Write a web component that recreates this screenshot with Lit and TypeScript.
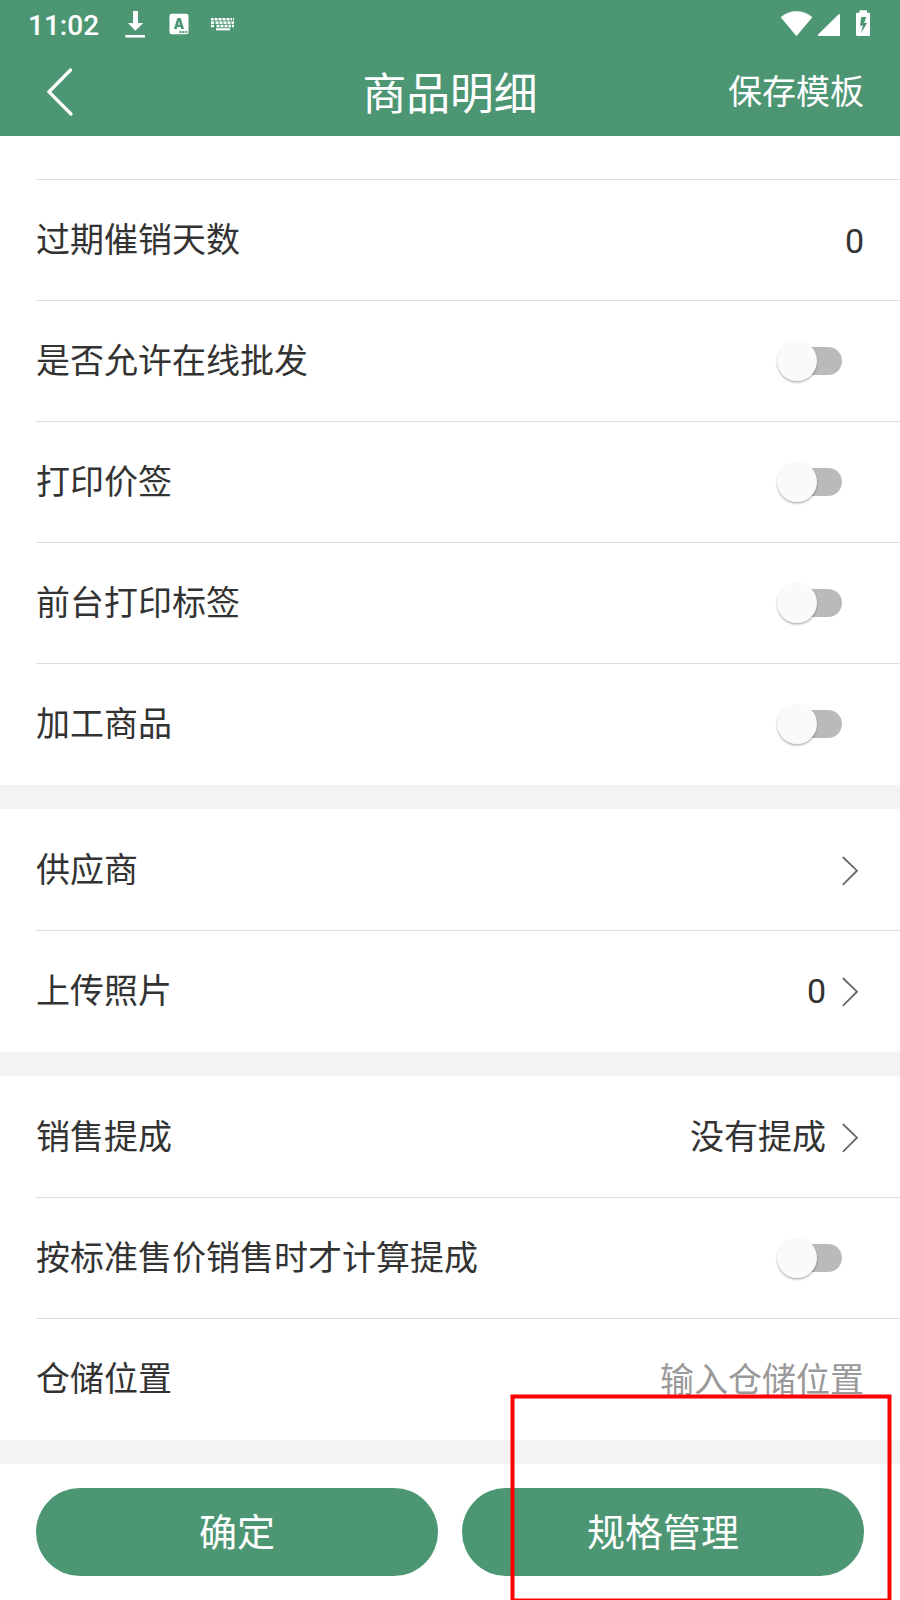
import { LitElement, html, css, svg, nothing } from "lit";
import { customElement, property } from "lit/decorators.js";

type Row = {
  label: string;
  value?: string;
  placeholder?: string;
  toggle?: boolean;
  link?: boolean;
};

const GROUPS: Row[][] = [
  [
    { label: "过期催销天数", value: "0" },
    { label: "是否允许在线批发", toggle: true },
    { label: "打印价签", toggle: true },
    { label: "前台打印标签", toggle: true },
    { label: "加工商品", toggle: true },
  ],
  [
    { label: "供应商", link: true },
    { label: "上传照片", value: "0", link: true },
  ],
  [
    { label: "销售提成", value: "没有提成", link: true },
    { label: "按标准售价销售时才计算提成", toggle: true },
    { label: "仓储位置", placeholder: "输入仓储位置" },
  ],
];

@customElement("toggle-switch")
export class ToggleSwitch extends LitElement {
  static styles = css`
    :host {
      display: block;
      width: 66px;
      height: 42px;
      margin-right: 22px;
    }
    .box {
      display: grid;
      align-items: center;
      height: 100%;
    }
    .track,
    .thumb {
      grid-area: 1 / 1;
    }
    .track {
      height: 28px;
      margin-left: 8px;
      border-radius: 14px;
      background: #bababa;
    }
    .thumb {
      width: 40.6px;
      height: 40.6px;
      margin-left: 0.6px;
      border-radius: 50%;
      background: #fafafa;
      box-shadow: 0 1px 2px rgba(0, 0, 0, 0.18), 0 2px 2px rgba(0, 0, 0, 0.14);
    }
  `;
  render() {
    return html`<div class="box"><div class="track"></div><div class="thumb"></div></div>`;
  }
}

@customElement("form-row")
export class FormRow extends LitElement {
  @property({ attribute: false }) row!: Row;

  static styles = css`
    :host {
      display: block;
    }
    .row {
      display: flex;
      align-items: center;
      justify-content: space-between;
      height: 120px;
      padding-right: 36px;
      font-size: 34px;
      line-height: 50px;
      color: #333;
    }
    .label,
    .value,
    .hint {
      white-space: nowrap;
    }
    .plain,
    .hint {
      padding-top: 2px;
    }
    .end {
      display: flex;
      align-items: center;
      gap: 16px;
    }
    .hint {
      color: #999;
    }
    .chevron {
      display: block;
      width: 22px;
      height: 32px;
    }
  `;
  render() {
    const r = this.row;
    return html`<div class="row">
      <span class="label">${r.label}</span>
      <span class="end">
        ${r.value ? html`<span class="value ${r.link ? "" : "plain"}">${r.value}</span>` : nothing}
        ${r.placeholder ? html`<span class="hint">${r.placeholder}</span>` : nothing}
        ${r.toggle ? html`<toggle-switch></toggle-switch>` : nothing}
        ${r.link
          ? html`<svg class="chevron" viewBox="0 0 22 32" fill="none" stroke="#666" stroke-width="1.8" stroke-linecap="round">
              <path d="M1.3 3.5 15 16.7 1.3 30.3" />
            </svg>`
          : nothing}
      </span>
    </div>`;
  }
}

const keys = [
  [0, 3.5, 7.5, 11.5, 15.5, 19.5, 22],
  [0, 4.5, 8.5, 12.5, 16.5, 20.5],
  [0, 5.5, 9.5, 13.5, 17.5, 21],
];

@customElement("app-root")
export class AppRoot extends LitElement {
  static styles = css`
    :host {
      display: block;
      position: relative;
      height: 1600px;
      overflow: hidden;
      background: #fff;
      font-family: Roboto, "Noto Sans CJK SC", sans-serif;
    }
    .top {
      height: 136px;
      background: #4d9674;
      color: #fff;
    }
    .status {
      display: flex;
      justify-content: space-between;
      align-items: center;
      height: 48px;
      padding: 0 30px 0 28px;
    }
    .clock {
      font-size: 28px;
      font-weight: 500;
      line-height: 34px;
      width: 97px;
      margin-top: 4px;
    }
    .side {
      display: flex;
      align-items: center;
    }
    .status svg {
      display: block;
    }
    .bar {
      display: grid;
      grid-template-columns: 1fr auto 1fr;
      align-items: center;
      height: 88px;
      padding: 0 36px;
    }
    .back {
      display: block;
      width: 48px;
      height: 50px;
    }
    .title {
      padding-top: 6px;
      font-size: 43.8px;
      line-height: 60px;
    }
    .save {
      justify-self: end;
      font-size: 34px;
      line-height: 50px;
    }
    .group {
      padding: 1px 0 1px 36px;
    }
    .first {
      padding-top: 43px;
    }
    .cell + .cell,
    .first .cell {
      border-top: 1px solid #dcdcdc;
    }
    .gap {
      height: 24px;
      background: #f3f3f3;
    }
    .actions {
      display: grid;
      grid-template-columns: 1fr 1fr;
      gap: 24px;
      padding: 24px 36px;
    }
    .btn {
      display: flex;
      align-items: center;
      justify-content: center;
      box-sizing: border-box;
      height: 88px;
      padding-top: 2px;
      border-radius: 44px;
      background: #4d9674;
      color: #fff;
      font-size: 38px;
      line-height: 56px;
    }
    .marker {
      position: absolute;
      inset: 0;
      width: 900px;
      height: 1600px;
      pointer-events: none;
    }
  `;

  render() {
    return html`
      <div class="top">
        <div class="status">
          <div class="side">
            <span class="clock">11:02</span>
            <svg width="115" height="48" viewBox="125 0 115 48" fill="#fff">
              <path d="M133 11h5v12h5.3L135.4 30.700 128 23h5zM125.300 35h19.700v2.600h-19.700z" />
              <path fill-rule="evenodd" d="M171.500 13.700h15a2 2 0 0 1 2 2v16.600a2 2 0 0 1-2 2h-15a2 2 0 0 1-2-2v-16.600a2 2 0 0 1 2-2zM177.400 18 173.900 29h2.900l.6-2h3.200l.6 2h2.900L180.700 18zM179 21.500l1 3.200h-2z" />
              <path fill="#4d9674" d="M179.500 31h2v2h-2zM182.500 31h2v2h-2zM185.500 31h1.700v2h-1.700z" />
              ${keys.map((row, i) =>
                row.map((x, j) => svg`<rect x=${211 + x} y=${18 + i * 3.4} width=${Math.min(3, (row[j + 1] ?? 24) - x - 1)} height="2.5" />`)
              )}
              <path d="M216 28.200h14v2.200h-14z" />
            </svg>
          </div>
          <svg width="90" height="48" viewBox="780 0 90 48" fill="#fff">
            <path d="M796.5 35.800 781 17.200C785.500 13.300 791 11.500 796.500 11.500s11 1.800 15.500 5.700z" stroke="#fff" stroke-width=".6" stroke-linejoin="round" />
            <path d="M840 14.800V36h-21.200c-.9 0-1.300-.9-.7-1.500L838.700 14.200c.5-.5 1.300-.2 1.300.6z" />
            <path fill-rule="evenodd" d="M859.500 10.200h7.500v2.600h1.800c.7 0 1.200.5 1.200 1.200V34.800c0 .7-.5 1.200-1.200 1.200h-11.600c-.7 0-1.200-.5-1.200-1.200V14c0-.7.5-1.200 1.200-1.200h2.300zM861.300 17l-1.300 8.800h2.800l-1.800 7.500 6.200-10.600h-3.100l2.300-5.700z" />
          </svg>
        </div>
        <div class="bar">
          <svg class="back" viewBox="36 67 48 50" fill="none" stroke="#fff" stroke-width="3.3" stroke-linecap="round">
            <path d="M70.500 70 49 91.800 71 114" />
          </svg>
          <span class="title">商品明细</span>
          <span class="save">保存模板</span>
        </div>
      </div>
      ${GROUPS.map(
        (g, i) => html`
          <div class="group ${i === 0 ? "first" : ""}">
            ${g.map((r) => html`<div class="cell"><form-row .row=${r}></form-row></div>`)}
          </div>
          <div class="gap"></div>
        `
      )}
      <div class="actions">
        <div class="btn">确定</div>
        <div class="btn">规格管理</div>
      </div>
      <svg class="marker" viewBox="0 0 900 1600" fill="none" stroke="#f00" stroke-width="4">
        <rect x="512.5" y="1396.500" width="377" height="204" />
      </svg>
    `;
  }
}
